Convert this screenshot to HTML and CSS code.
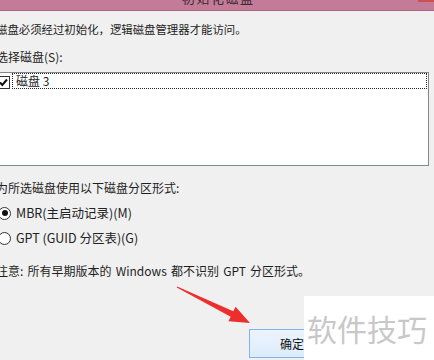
FILE: index.html
```html
<!DOCTYPE html>
<html lang="zh-CN">
<head>
  <meta charset="UTF-8" />
  <title>初始化磁盘</title>
  <link rel="stylesheet" href="styles.css">
</head>
<body>
  <div class="titlebar">
    <span class="title">初始化磁盘</span>
    <span class="close"></span>
  </div>

  <div class="content">
    <p class="line msg">磁盘必须经过初始化，逻辑磁盘管理器才能访问。</p>
    <p class="line pick">选择磁盘(S):</p>

    <div class="listbox">
      <div class="item">
        <span class="check">
          <svg width="13" height="13" viewBox="0 0 13 13">
            <rect x="0.5" y="0.5" width="12" height="12" fill="#fff" stroke="#333"/>
            <path d="M3 6.5 L5.3 9 L10 3.5" fill="none" stroke="#111" stroke-width="2"/>
          </svg>
        </span>
        <span class="item-text">磁盘 3</span>
      </div>
    </div>

    <p class="line style-label">为所选磁盘使用以下磁盘分区形式:</p>

    <div class="radio first">
      <span class="dot on"></span>
      <span>MBR(主启动记录)(M)</span>
    </div>
    <div class="radio">
      <span class="dot"></span>
      <span>GPT (GUID 分区表)(G)</span>
    </div>

    <p class="line note">注意: 所有早期版本的 Windows 都不识别 GPT 分区形式。</p>

    <div class="buttons">
      <button class="ok">确定</button>
    </div>
  </div>

  <!-- annotation arrow drawn over the dialog -->
  <svg class="arrow" width="434" height="360" viewBox="0 0 434 360">
    <polygon fill="#ec2f2c" points="177.2,286.4 233.3,311.3 235.6,306.8 250,323 228.4,321.2 230.7,316.7 176.8,287.6"/>
  </svg>

  <div class="watermark">软件技巧</div>
</body>
</html>
```

FILE: styles.css
```css
body {
  margin: 0;
  width: 434px;
  height: 360px;
  overflow: hidden;
  background-color: #f0f0f0;
  color: #1e1e1e;
  font-family: "Noto Sans CJK SC", "Noto Sans", sans-serif;
  font-size: 12px;
  position: relative;
}

.titlebar {
  height: 10px;
  background-color: #c37b98;
  border-bottom: 1px solid #a8657f;
  position: relative;
  overflow: hidden;
}

.title {
  position: absolute;
  left: 182px;
  top: -10px;
  font-size: 13px;
  line-height: 16px;
  letter-spacing: 1.5px;
  color: #3a2a30;
}

.close {
  position: absolute;
  right: 0;
  top: 0;
  width: 16px;
  height: 2px;
  background-color: #c9514f;
}

.content {
  margin-left: -5px;
  width: 439px;
  display: flex;
  flex-direction: column;
}

.line {
  margin: 0;
  padding-left: 1px;
  height: 16px;
  line-height: 16px;
  white-space: nowrap;
}

.msg {
  margin-top: 10px;
  font-size: 11.4px;
}

.pick {
  margin-top: 12px;
}

.listbox {
  margin-top: 7px;
  width: 432px;
  height: 92px;
  background: #fff;
  border: 1px solid #828790;
}

.item {
  display: flex;
  align-items: center;
  height: 16px;
}

.check {
  display: flex;
  margin-left: 1px;
  width: 13px;
  height: 13px;
  margin-top: 3px;
}

.item-text {
  flex: 1;
  margin-left: 2px;
  margin-right: 1px;
  height: 14px;
  line-height: 14px;
  padding-left: 3px;
  border: 1px dotted #222;
}

.style-label {
  margin-top: 14px;
}

.radio {
  display: flex;
  align-items: center;
  gap: 5px;
  height: 16px;
  line-height: 16px;
  margin-top: 9px;
  padding-left: 3px;
  font-size: 12.5px;
  color: #222;
}

.dot {
  width: 11px;
  height: 11px;
  border: 1px solid #333;
  border-radius: 50%;
  background: #fff;
  position: relative;
  flex-shrink: 0;
}

.dot.on::after {
  content: "";
  position: absolute;
  left: 2.5px;
  top: 2.5px;
  width: 6px;
  height: 6px;
  border-radius: 50%;
  background: #111;
}

.note {
  margin-top: 17px;
  word-spacing: 1.5px;
}

.buttons {
  margin-top: 50px;
  padding-left: 254px;
}

.ok {
  width: 86px;
  height: 29px;
  padding: 0;
  font-family: inherit;
  font-size: 12px;
  color: #111;
  border: 1px solid #7eb4ea;
  background: linear-gradient(#ecf4fc, #dcecfc);
}

.arrow {
  position: absolute;
  left: 0;
  top: 0;
  pointer-events: none;
}

.watermark {
  position: absolute;
  left: 304px;
  top: 296px;
  width: 130px;
  height: 64px;
  background: #fff;
  color: #c8c8c8;
  font-size: 30px;
  line-height: 64px;
  padding-left: 3px;
  box-sizing: border-box;
  white-space: nowrap;
}
```
